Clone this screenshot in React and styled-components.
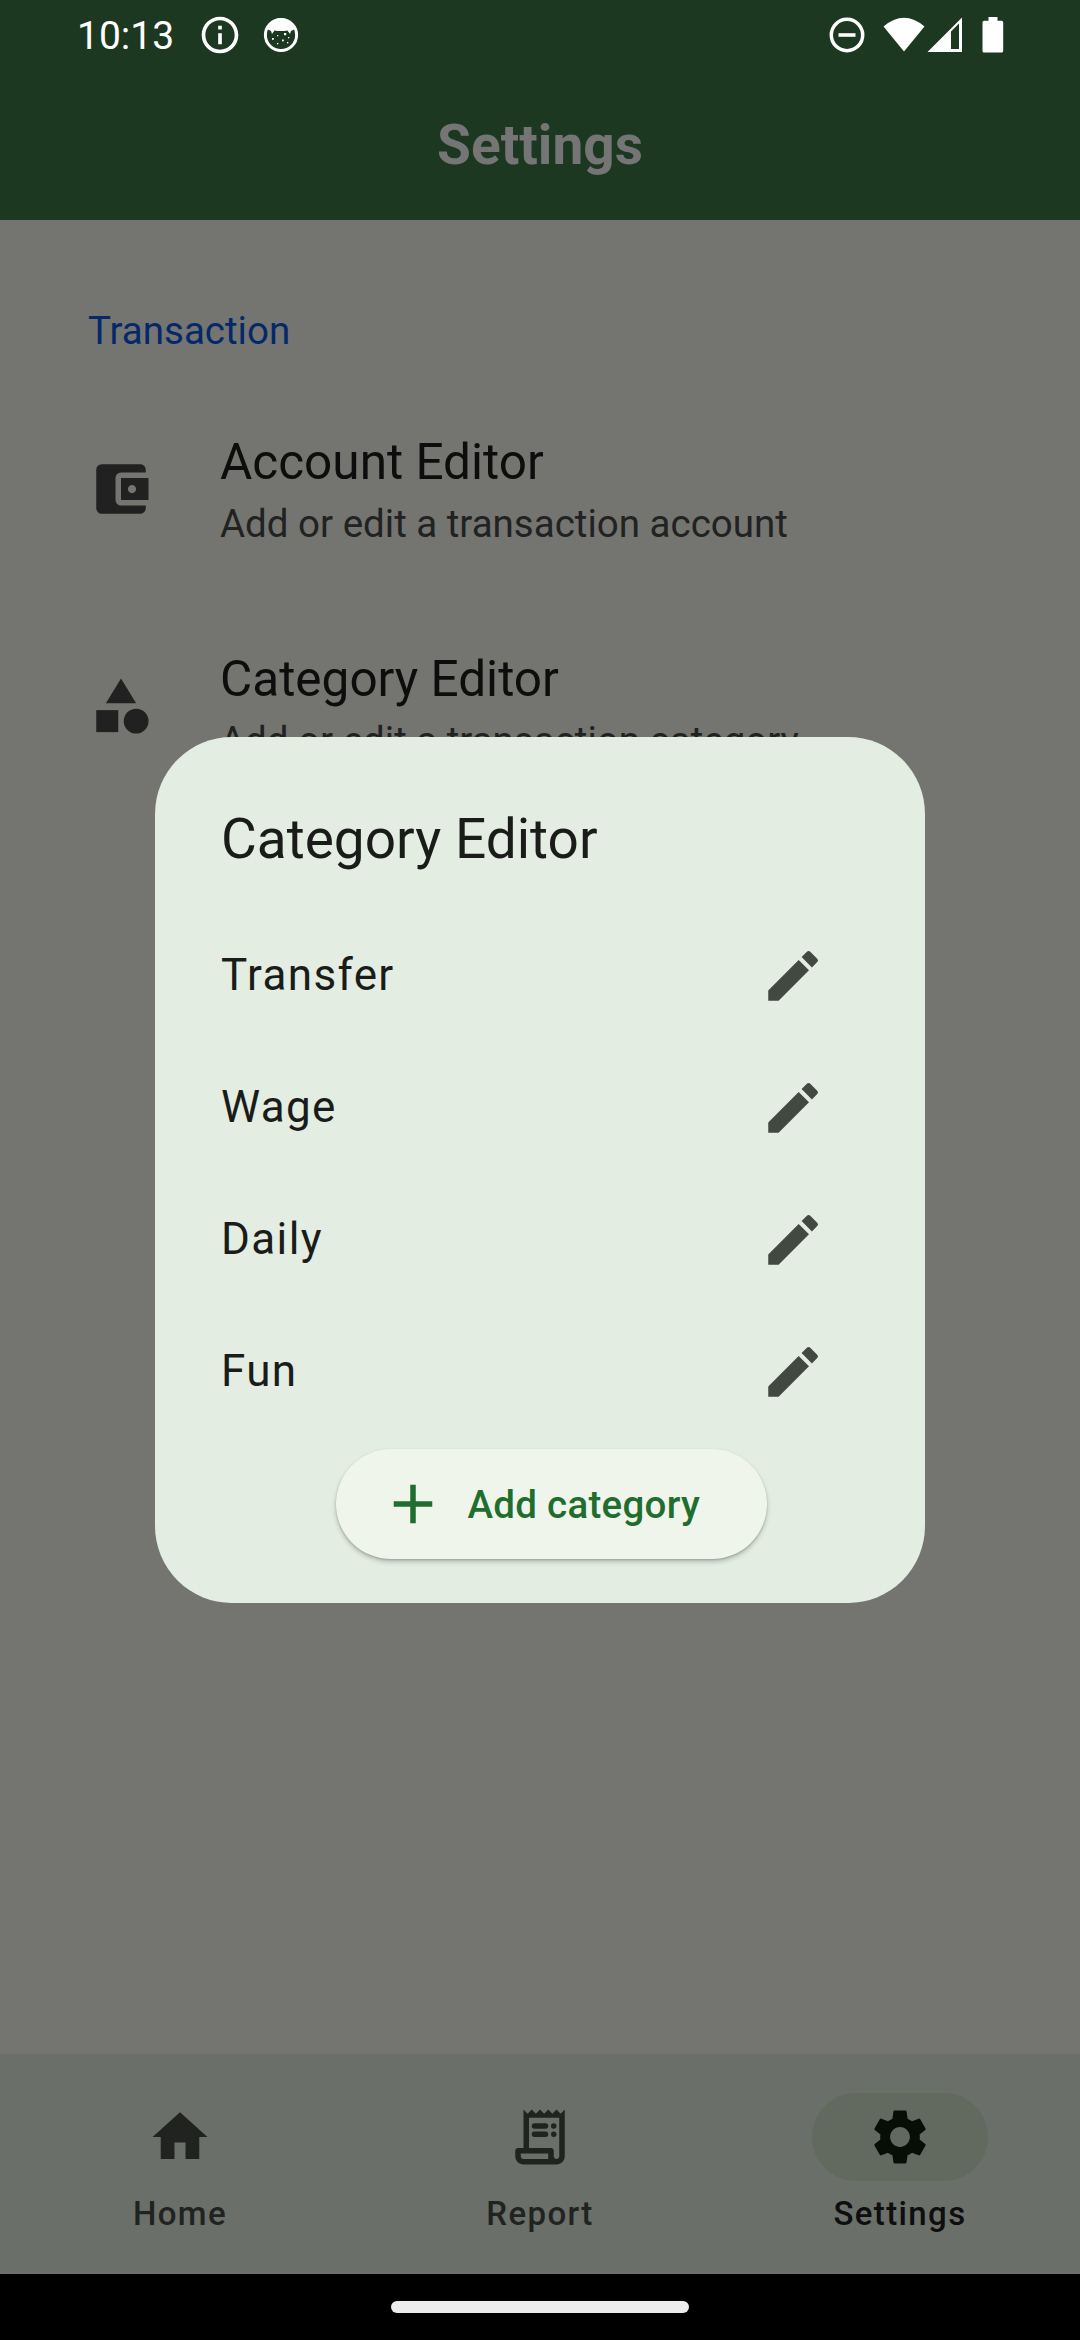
import React from "react";
import styled, { createGlobalStyle } from "styled-components";
import {
  MdAccountBalanceWallet,
  MdCategory,
  MdEdit,
  MdAdd,
  MdSettings,
  MdInfoOutline,
} from "react-icons/md";

const GlobalStyle = createGlobalStyle`
  body { margin: 0; background: #000; }
  * { box-sizing: border-box; }
`;

const Screen = styled.div`
  position: relative;
  width: 1080px;
  height: 2340px;
  overflow: hidden;
  display: flex;
  flex-direction: column;
  background: #747570;
  font-family: Roboto, "Noto Sans", sans-serif;
  color: #0c0d0c;
`;

const Header = styled.header`
  height: 220px;
  flex: none;
  display: flex;
  flex-direction: column;
  background: #1c3820;
`;

const StatusBar = styled.div`
  height: 70px;
  padding: 0 76px 0 77px;
  display: flex;
  align-items: center;
  color: #fff;
  svg { display: block; flex: none; }
`;

const Clock = styled.span`
  width: 121px;
  padding-top: 2px;
  font-size: 39px;
  line-height: 45px;
`;

const StatusGroup = styled.div`
  display: flex;
  align-items: center;
  gap: ${(p) => p.$gap}px;
  margin-left: ${(p) => (p.$end ? "auto" : "0")};
`;

const PageTitle = styled.h1`
  margin: 0;
  padding-top: 43px;
  text-align: center;
  font-size: 55px;
  line-height: 64px;
  font-weight: 700;
  color: #757575;
`;

const Content = styled.main`
  flex: 1;
  padding: 88px 88px 0;
  display: flex;
  flex-direction: column;
`;

const SectionLabel = styled.h2`
  margin: 0 0 40px;
  font-size: 38.5px;
  line-height: 45px;
  font-weight: 400;
  color: #05286b;
`;

const SettingRow = styled.div`
  height: 217px;
  padding-top: 40px;
  display: flex;
  align-items: flex-start;
  svg { display: block; margin: 23px 66px 0 0; color: #212121; flex: none; }
`;

const SettingTitle = styled.div`
  font-size: 49.5px;
  line-height: 58px;
  white-space: nowrap;
`;

const SettingNote = styled.div`
  margin-top: 10px;
  font-size: 38.5px;
  line-height: 46px;
  color: #212221;
  white-space: nowrap;
`;

const NavBar = styled.nav`
  height: 220px;
  flex: none;
  display: grid;
  grid-template-columns: repeat(3, 1fr);
  background: #6a6f69;
`;

const NavItem = styled.div`
  padding-top: 39px;
  display: flex;
  flex-direction: column;
  align-items: center;
  color: ${(p) => (p.$active ? "#0d0e0d" : "#20231f")};
`;

const Indicator = styled.div`
  width: 176px;
  height: 88px;
  border-radius: 44px;
  display: flex;
  align-items: center;
  justify-content: center;
  background: ${(p) => (p.$active ? "#62695e" : "transparent")};
  svg { display: block; color: ${(p) => (p.$active ? "#050f06" : "#20231f")}; }
`;

const NavLabel = styled.span`
  margin-top: 13px;
  font-size: 33px;
  line-height: 39px;
  font-weight: 500;
  letter-spacing: 1.375px;
`;

const SystemBar = styled.div`
  height: 66px;
  flex: none;
  display: flex;
  align-items: center;
  justify-content: center;
  background: #000;
`;

const Handle = styled.div`
  width: 298px;
  height: 11.4px;
  border-radius: 6px;
  background: #ececec;
`;

const Overlay = styled.div`
  position: absolute;
  inset: 0;
  display: flex;
  align-items: center;
  justify-content: center;
`;

const Dialog = styled.section`
  width: 770px;
  height: 866px;
  padding: 66px 66px 33px;
  border-radius: 77px;
  display: flex;
  flex-direction: column;
  background: #e3ede1;
  color: #1a1c19;
`;

const DialogTitle = styled.h2`
  margin: 4px 0 0;
  height: 103px;
  font-size: 55px;
  line-height: 64px;
  font-weight: 400;
`;

const CategoryRow = styled.div`
  height: 132px;
  display: flex;
  align-items: center;
  justify-content: space-between;
  padding: 0 33px 0 0;
  svg { display: block; color: #424940; }
`;

const CategoryName = styled.span`
  padding-bottom: 2px;
  font-size: 44px;
  line-height: 66px;
  letter-spacing: 1.375px;
`;

const AddButton = styled.button`
  width: 431px;
  height: 110px;
  margin: 11px 0 0 22px;
  align-self: center;
  padding: 0 0 0 44px;
  border: 0;
  border-radius: 55px;
  display: flex;
  align-items: center;
  flex: none;
  gap: 22px;
  font: 500 38.5px/55px Roboto, sans-serif;
  letter-spacing: 0.275px;
  white-space: nowrap;
  color: #1f6d2f;
  background: #eff5ea;
  box-shadow: 0 3px 5px rgba(0, 0, 0, 0.2), 0 1px 2px rgba(0, 0, 0, 0.18);
`;

const FaceIcon = () => (
  <svg width="36" height="36" viewBox="0 0 36 36">
    <circle cx="18" cy="18" r="15.6" fill="none" stroke="#fff" strokeWidth="3" />
    <path d="M4 12Q7 2 18 1Q29 2 32 12L28 14 27 17 24.500 13.500Q18 14.500 11.500 13.500L9 17 8 14Z" fill="#fff" />
    <g fill="#fff">
      <rect x="21" y="16" width="2.200" height="2.200" />
      <rect x="9" y="21" width="1.800" height="1.800" />
      <rect x="14" y="18" width="1.300" height="1.300" />
      <rect x="19" y="22.500" width="1.800" height="1.800" />
      <rect x="25" y="20" width="1.300" height="1.300" />
      <rect x="14" y="26" width="1.300" height="1.300" />
      <rect x="24" y="25" width="1.300" height="1.300" />
    </g>
  </svg>
);

const DoNotDisturbIcon = () => (
  <svg width="36" height="36" viewBox="0 0 36 36">
    <circle cx="18" cy="18" r="15.700" fill="none" stroke="#fff" strokeWidth="3.500" />
    <path d="M9.500 16.200h17v3.600h-17z" fill="#fff" />
  </svg>
);

const WifiIcon = () => (
  <svg width="42" height="36" viewBox="0 0 42 36">
    <path d="M0.500 9.500Q21-8 41.500 9.500L21 34.500Z" fill="#fff" />
  </svg>
);

const SignalIcon = () => (
  <svg width="36" height="36" viewBox="0 0 36 36">
    <path d="M0.500 35L35 0.500V35ZM24 14.500V32h8V6.500Z" fill="#fff" fillRule="evenodd" />
  </svg>
);

const BatteryIcon = () => (
  <svg width="22" height="36" viewBox="0 0 22 36">
    <path d="M6.500 0h9v3.800h4.200q1.500 0 1.500 1.500v28.700q0 1.500-1.500 1.500H2q-1.500 0-1.500-1.500V5.300q0-1.500 1.500-1.500h4.500z" fill="#fff" />
  </svg>
);

const HomeIcon = () => (
  <svg width="66" height="66" viewBox="0 0 24 24" fill="currentColor">
    <path d="M10 20v-6h4v6h5v-8h3L12 3 2 12h3v8z" />
  </svg>
);

const ReceiptIcon = () => (
  <svg width="66" height="66" viewBox="0 0 24 24" fill="currentColor">
    <path
      fillRule="evenodd"
      d="M19.500 3.500 18 2l-1.500 1.500L15 2l-1.500 1.500L12 2l-1.500 1.500L9 2 7.500 3.500 6 2v14H4c-.55 0-1 .45-1 1v2c0 1.660 1.340 3 3 3h12c1.660 0 3-1.340 3-3V2zM15 20H6c-.55 0-1-.45-1-1v-1h10zm4-1c0 .55-.45 1-1 1s-1-.45-1-1v-2c0-.55-.45-1-1-1H8V5h11z"
    />
    <path d="M10 7h4a1 1 0 0 1 0 2h-4a1 1 0 0 1 0-2zM10 10h4a1 1 0 0 1 0 2h-4a1 1 0 0 1 0-2z" />
    <circle cx="17" cy="8" r="1" />
    <circle cx="17" cy="11" r="1" />
  </svg>
);

const settings = [
  { title: "Account Editor", note: "Add or edit a transaction account", Icon: MdAccountBalanceWallet },
  { title: "Category Editor", note: "Add or edit a transaction category", Icon: MdCategory },
];

const categories = ["Transfer", "Wage", "Daily", "Fun"];

const tabs = [
  { label: "Home", Icon: HomeIcon },
  { label: "Report", Icon: ReceiptIcon },
  { label: "Settings", Icon: MdSettings, active: true },
];

export default function App() {
  return (
    <>
      <GlobalStyle />
      <Screen>
        <Header>
          <StatusBar>
            <Clock>10:13</Clock>
            <StatusGroup $gap={21}>
              <MdInfoOutline size={44} />
              <FaceIcon />
            </StatusGroup>
            <StatusGroup $end $gap={2.5}>
              <StatusGroup $gap={18}>
                <DoNotDisturbIcon />
                <WifiIcon />
              </StatusGroup>
              <StatusGroup $gap={19}>
                <SignalIcon />
                <BatteryIcon />
              </StatusGroup>
            </StatusGroup>
          </StatusBar>
          <PageTitle>Settings</PageTitle>
        </Header>
        <Content>
          <SectionLabel>Transaction</SectionLabel>
          {settings.map(({ title, note, Icon }) => (
            <SettingRow key={title}>
              <Icon size={66} />
              <div>
                <SettingTitle>{title}</SettingTitle>
                <SettingNote>{note}</SettingNote>
              </div>
            </SettingRow>
          ))}
        </Content>
        <NavBar>
          {tabs.map(({ label, Icon, active }) => (
            <NavItem key={label} $active={active}>
              <Indicator $active={active}>
                <Icon size={66} />
              </Indicator>
              <NavLabel>{label}</NavLabel>
            </NavItem>
          ))}
        </NavBar>
        <SystemBar>
          <Handle />
        </SystemBar>
        <Overlay>
          <Dialog>
            <DialogTitle>Category Editor</DialogTitle>
            {categories.map((name) => (
              <CategoryRow key={name}>
                <CategoryName>{name}</CategoryName>
                <MdEdit size={66} />
              </CategoryRow>
            ))}
            <AddButton>
              <MdAdd size={66} />
              Add category
            </AddButton>
          </Dialog>
        </Overlay>
      </Screen>
    </>
  );
}
